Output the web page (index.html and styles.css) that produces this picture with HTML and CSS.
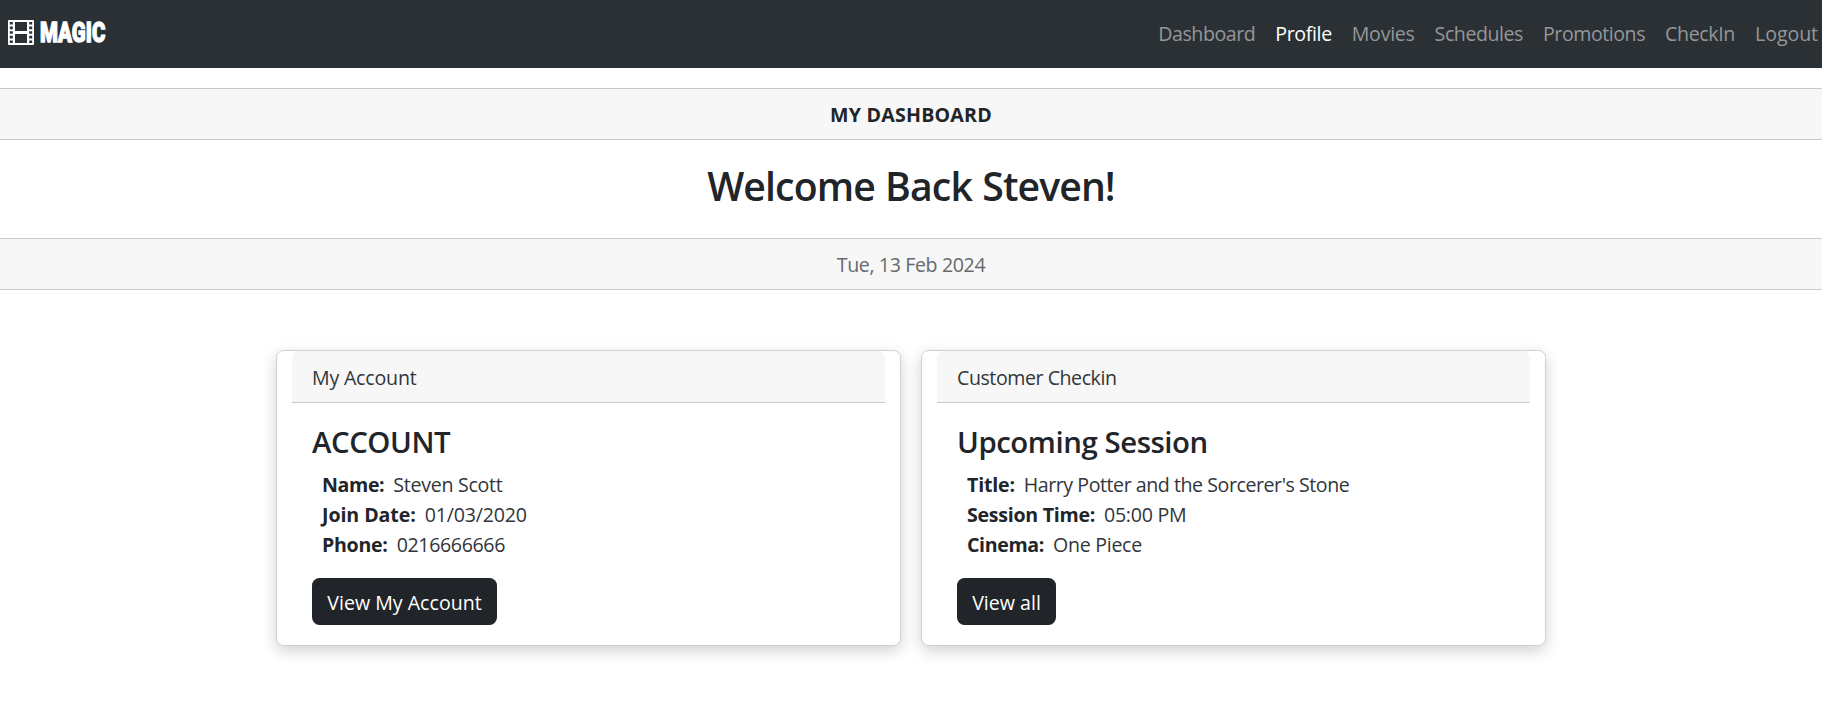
FILE: index.html
```html
<!DOCTYPE html>
<html lang="en">
<head>
<meta charset="utf-8">
<title>Magic - My Dashboard</title>
<link rel="stylesheet" href="styles.css">
</head>
<body>
<nav class="navbar">
  <a class="brand">
    <svg class="film" width="26" height="25" viewBox="0 0 26 25">
      <path fill="#fff" fill-rule="evenodd" d="M1 0H25Q26 0 26 1V24Q26 25 25 25H1Q0 25 0 24V1Q0 0 1 0ZM7 2V11H19V2ZM7 14V23H19V14ZM1.8 2V4.6H4.8V2ZM1.8 6.6V9.2H4.8V6.6ZM1.8 11.2V13.8H4.8V11.2ZM1.8 15.8V18.4H4.8V15.8ZM1.8 20.4V23H4.8V20.4ZM21.2 2V4.6H24.2V2ZM21.2 6.6V9.2H24.2V6.6ZM21.2 11.2V13.8H24.2V11.2ZM21.2 15.8V18.4H24.2V15.8ZM21.2 20.4V23H24.2V20.4Z"/>
    </svg>
    <span class="brand-name">MAGIC</span>
  </a>
  <div class="links">
    <a class="ls-5">Dashboard</a>
    <a class="active ls-4">Profile</a>
    <a class="ls-3">Movies</a>
    <a class="ls-5">Schedules</a>
    <a class="ls-5">Promotions</a>
    <a class="ls-4">CheckIn</a>
    <a class="ls-1">Logout</a>
  </div>
</nav>
<header class="welcome">
  <div class="band band-title">MY DASHBOARD</div>
  <h1>Welcome Back Steven!</h1>
  <div class="band band-date ls-4">Tue, 13 Feb 2024</div>
</header>
<main class="cards">
  <section class="card">
    <div class="card-header ls-2">My Account</div>
    <div class="card-body">
      <h2>ACCOUNT</h2>
      <dl>
        <div class="row"><dt class="ls-4">Name:</dt><dd class="ls-3">Steven Scott</dd></div>
        <div class="row"><dt class="ls-1">Join Date:</dt><dd class="ls-2">01/03/2020</dd></div>
        <div class="row"><dt class="ls-3">Phone:</dt><dd class="ls-4">0216666666</dd></div>
      </dl>
      <a class="btn btn-account">View My Account</a>
    </div>
  </section>
  <section class="card">
    <div class="card-header ls-5">Customer Checkin</div>
    <div class="card-body">
      <h2>Upcoming Session</h2>
      <dl>
        <div class="row"><dt class="ls-2">Title:</dt><dd class="ls-5">Harry Potter and the Sorcerer's Stone</dd></div>
        <div class="row"><dt class="ls-3">Session Time:</dt><dd class="ls-3">05:00 PM</dd></div>
        <div class="row"><dt class="ls-4">Cinema:</dt><dd class="ls-3">One Piece</dd></div>
      </dl>
      <a class="btn btn-all">View all</a>
    </div>
  </section>
</main>
</body>
</html>
```
FILE: styles.css
```css
* { box-sizing: border-box; }
body {
  margin: 0;
  min-height: 100vh;
  background: #fff;
  color: #212529;
  font: 400 19.6px/30px "Segoe UI", "Open Sans", sans-serif;
}
h1, h2, dl, dd { margin: 0; }

/* tracking steps */
.ls-1 { letter-spacing: -0.08px; }
.ls-2 { letter-spacing: -0.2px; }
.ls-3 { letter-spacing: -0.28px; }
.ls-4 { letter-spacing: -0.37px; }
.ls-5 { letter-spacing: -0.45px; }

.navbar {
  display: flex;
  align-items: center;
  justify-content: space-between;
  height: 68px;
  padding: 0 4px 0 8px;
  background: #2b3035;
}
.brand { display: flex; align-items: center; gap: 6px; width: 120px; color: #fff; }
.film { flex: none; margin-bottom: 3px; }
.brand-name {
  font: 900 28px/30px Roboto, sans-serif;
  transform: scaleX(.73);
  transform-origin: left;
  -webkit-text-stroke: 1.3px #fff;
  margin-bottom: 3px;
}
.links { display: flex; gap: 20px; color: #959799; padding-bottom: 1px; }
.links .active { color: #fff; }

.band {
  height: 52px;
  padding: 11px 20px 9px;
  border: solid #c8c9ca;
  border-width: 1px 0;
  background: #f7f7f7;
  text-align: center;
}
.welcome { padding-top: 20px; text-align: center; }
.band-title { font-weight: 700; letter-spacing: .22px; }
.band-date { color: #666a6e; }
h1 {
  padding: 22px 0 28px;
  font-size: 39.2px;
  line-height: 48px;
  font-weight: 600;
  letter-spacing: -.9px;
  word-spacing: 1px;
}

.cards {
  display: grid;
  grid-template-columns: 625px 625px;
  gap: 20px;
  justify-content: center;
  padding-top: 60px;
}
.card {
  height: 296px;
  padding: 0 15px;
  border: 1px solid #cfd0d1;
  border-radius: 7.5px;
  box-shadow: 0 5px 15px rgba(0, 0, 0, .18);
  background: #fff;
}
.card-header {
  height: 52px;
  padding: 12px 20px 9px;
  border-bottom: 1px solid #c8c9ca;
  border-radius: 6.5px 6.5px 0 0;
  background: #f7f7f7;
}
.card-body { padding: 21px 20px 20px; }
h2 {
  margin-bottom: 10px;
  font-size: 29.4px;
  line-height: 36px;
  font-weight: 600;
  letter-spacing: -.45px;
}
dl { padding-left: 10px; margin-bottom: 18px; }
.row { display: flex; gap: 9px; }
dt { font-weight: 700; }
.card-header, dd { color: #32363a; }
.btn {
  display: block;
  height: 47px;
  padding: 9.5px 0 7.5px;
  border-radius: 7.5px;
  background: #212529;
  color: #fff;
  text-align: center;
}
.btn-account { width: 185px; }
.btn-all { width: 99px; }
```
